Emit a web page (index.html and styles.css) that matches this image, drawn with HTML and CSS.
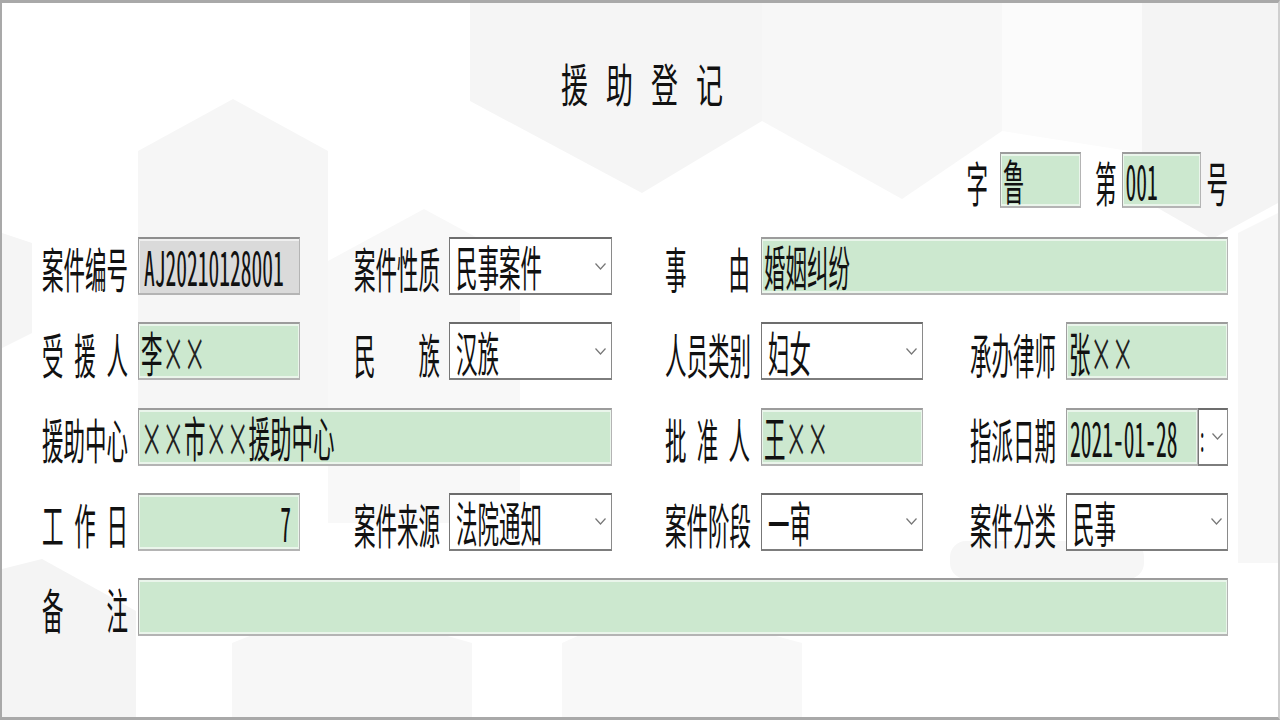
FILE: index.html
```html
<!DOCTYPE html>
<html lang="zh-CN">
<head>
<meta charset="utf-8">
<title>援助登记</title>
<link rel="stylesheet" href="styles.css">
</head>
<body>
<div class="page">
  <svg class="bg" width="1276" height="714" viewBox="0 0 1276 714" aria-hidden="true">
    <polygon points="468,0 760,0 760,118 640,190 468,98" fill="#f5f5f5"/>
    <polygon points="760,0 1000,0 1000,128 900,196 760,118" fill="#f7f7f7"/>
    <polygon points="1000,0 1140,0 1140,150 1000,128" fill="#fbfbfb"/>
    <polygon points="1140,0 1276,0 1276,200 1210,236 1140,196" fill="#f4f4f4"/>
    <polygon points="136,148 231,96 326,148 326,420 136,420" fill="#f6f6f6"/>
    <polygon points="326,258 422,206 518,258 518,520 326,520" fill="#f8f8f8"/>
    <polygon points="0,230 30,240 30,330 0,345" fill="#f5f5f5"/>
    <polygon points="0,566 40,556 134,608 134,714 0,714" fill="#f4f4f4"/>
    <polygon points="230,640 330,600 470,640 470,714 230,714" fill="#f7f7f7"/>
    <polygon points="560,640 650,600 800,640 800,714 560,714" fill="#f8f8f8"/>
    <rect x="948" y="538" width="194" height="38" rx="16" fill="#f6f6f6"/>
    <polygon points="1236,230 1276,210 1276,560 1236,560" fill="#f7f7f7"/>
  </svg>

  <div class="title"><span class="tt">援助登记</span></div>

  <div class="docno">
    <span class="lbl">字</span>
    <div class="fld g w81"><span class="t">鲁</span></div>
    <span class="lbl l2">第</span>
    <div class="fld g w79"><span class="t num">001</span></div>
    <span class="lbl l3">号</span>
  </div>

  <div class="grid">
    <div class="lbl c1">案件编号</div>
    <div class="fld ro c3"><span class="t num">AJ20210128001</span></div>
    <div class="lbl c5">案件性质</div>
    <div class="fld sel c7"><span class="t">民事案件</span><svg class="chev" width="11" height="7" viewBox="0 0 11 7"><polyline points="0.5,0.5 5.5,6 10.5,0.5" fill="none" stroke="#777" stroke-width="1.2"/></svg></div>
    <div class="lbl c9 sp"><span>事</span><span>由</span></div>
    <div class="fld g c11w"><span class="t">婚姻纠纷</span></div>

    <div class="lbl c1 sp"><span>受</span><span>援</span><span>人</span></div>
    <div class="fld g c3"><span class="t">李<span class="x">×</span><span class="x">×</span></span></div>
    <div class="lbl c5 sp"><span>民</span><span>族</span></div>
    <div class="fld sel c7"><span class="t">汉族</span><svg class="chev" width="11" height="7" viewBox="0 0 11 7"><polyline points="0.5,0.5 5.5,6 10.5,0.5" fill="none" stroke="#777" stroke-width="1.2"/></svg></div>
    <div class="lbl c9">人员类别</div>
    <div class="fld sel c11"><span class="t">妇女</span><svg class="chev" width="11" height="7" viewBox="0 0 11 7"><polyline points="0.5,0.5 5.5,6 10.5,0.5" fill="none" stroke="#777" stroke-width="1.2"/></svg></div>
    <div class="lbl c13">承办律师</div>
    <div class="fld g c15"><span class="t">张<span class="x">×</span><span class="x">×</span></span></div>

    <div class="lbl c1">援助中心</div>
    <div class="fld g c3w"><span class="t"><span class="x">×</span><span class="x">×</span>市<span class="x">×</span><span class="x">×</span>援助中心</span></div>
    <div class="lbl c9 sp"><span>批</span><span>准</span><span>人</span></div>
    <div class="fld g c11"><span class="t">王<span class="x">×</span><span class="x">×</span></span></div>
    <div class="lbl c13">指派日期</div>
    <div class="date c15">
      <div class="fld g dpart"><span class="t num">2021-01-28</span></div>
      <div class="fld dbtn"><span class="t colon">:</span><svg class="chev" width="11" height="7" viewBox="0 0 11 7"><polyline points="0.5,0.5 5.5,6 10.5,0.5" fill="none" stroke="#777" stroke-width="1.2"/></svg></div>
    </div>

    <div class="lbl c1 sp"><span>工</span><span>作</span><span>日</span></div>
    <div class="fld g c3 right"><span class="t num">7</span></div>
    <div class="lbl c5">案件来源</div>
    <div class="fld sel c7"><span class="t">法院通知</span><svg class="chev" width="11" height="7" viewBox="0 0 11 7"><polyline points="0.5,0.5 5.5,6 10.5,0.5" fill="none" stroke="#777" stroke-width="1.2"/></svg></div>
    <div class="lbl c9">案件阶段</div>
    <div class="fld sel c11"><span class="t">一审</span><svg class="chev" width="11" height="7" viewBox="0 0 11 7"><polyline points="0.5,0.5 5.5,6 10.5,0.5" fill="none" stroke="#777" stroke-width="1.2"/></svg></div>
    <div class="lbl c13">案件分类</div>
    <div class="fld sel c15"><span class="t">民事</span><svg class="chev" width="11" height="7" viewBox="0 0 11 7"><polyline points="0.5,0.5 5.5,6 10.5,0.5" fill="none" stroke="#777" stroke-width="1.2"/></svg></div>

    <div class="lbl c1 sp"><span>备</span><span>注</span></div>
    <div class="fld g c3all"></div>
  </div>
</div>
</body>
</html>
```

FILE: styles.css
```css
html, body {
  margin: 0;
  padding: 0;
  background: #ffffff;
}

body {
  font-family: "Noto Sans CJK SC", "Noto Sans", sans-serif;
  color: #111;
}

.page {
  position: relative;
  width: 1280px;
  height: 720px;
  box-sizing: border-box;
  border-top: 3px solid #a9a9a9;
  border-bottom: 3px solid #a9a9a9;
  border-left: 2px solid #a9a9a9;
  border-right: 2px solid #cfcfcf;
  padding-top: 49px;
  overflow: hidden;
  background: #fff;
}

.bg {
  position: absolute;
  left: 0;
  top: 0;
  z-index: 0;
}

.title,
.docno,
.grid {
  position: relative;
  z-index: 1;
}

.title {
  height: 60px;
  display: flex;
  align-items: center;
  justify-content: center;
  padding-left: 22px;
}

.tt {
  display: inline-block;
  font-size: 27px;
  letter-spacing: 18px;
  line-height: 1;
  transform: scaleY(1.7);
}

/* 字 ... 号 */
.docno {
  margin-top: 40px;
  height: 56px;
  display: flex;
  align-items: center;
  justify-content: flex-end;
  padding-right: 50px;
}

.docno .fld {
  height: 56px;
}

.docno .lbl {
  margin-right: 12px;
}

.docno .l2 {
  margin-left: 14px;
  margin-right: 6px;
}

.docno .l3 {
  margin-left: 5px;
  margin-right: 0;
}

.w81 { width: 81px; }
.w79 { width: 79px; }

/* Main grid */
.grid {
  margin-top: 29px;
  margin-left: 40px;
  display: grid;
  grid-template-columns: 86px 10px 162px 54px 86px 9px 163px 53px 85px 11px 162px 47px 86px 10px 162px;
  grid-template-rows: repeat(5, 58px);
  row-gap: 27.25px;
}

.c1 { grid-column: 1; }
.c3 { grid-column: 3; }
.c3w { grid-column: 3 / 8; }
.c3all { grid-column: 3 / 16; }
.c5 { grid-column: 5; }
.c7 { grid-column: 7; }
.c9 { grid-column: 9; }
.c11 { grid-column: 11; }
.c11w { grid-column: 11 / 16; }
.c13 { grid-column: 13; }
.c15 { grid-column: 15; }

/* Labels */
.lbl {
  font-size: 21.5px;
  line-height: 1;
  align-self: center;
  display: flex;
  white-space: nowrap;
  transform: translateY(2px) scaleY(2.2);
  color: #111;
}

.lbl.sp {
  justify-content: space-between;
}

/* Fields */
.fld {
  box-sizing: border-box;
  height: 100%;
  display: flex;
  align-items: center;
  font-size: 21.5px;
  border-top: 2px solid #9c9c9c;
  border-bottom: 2px solid #b4b4b4;
  border-left: 1px solid #a0a0a0;
  border-right: 1px solid #b4b4b4;
  padding-left: 2px;
  white-space: nowrap;
}

.fld .t {
  display: inline-block;
  line-height: 1;
  transform: scaleY(2.2);
  color: #111;
}

.num {
  font-feature-settings: "hwid" 1;
}

.x {
  display: inline-block;
  width: 1em;
  text-align: center;
  color: #222;
}

.g {
  background: #cce8cf;
  box-shadow: inset 0 2px 0 #eaf5eb, inset 1px 0 0 #eaf5eb, inset -1px 0 0 #eaf5eb, inset 0 -2px 0 #eaf5eb;
}

.ro {
  background: #dadada;
  border-top: 2px solid #8e8e8e;
  box-shadow: inset 0 2px 0 #efefef, inset 1px 0 0 #efefef;
  padding-left: 5px;
}

.sel {
  background: #ffffff;
  border-top: 2px solid #6d6d6d;
  border-bottom: 2px solid #7d7d7d;
  border-left: 1px solid #777;
  border-right: 1px solid #8a8a8a;
  justify-content: space-between;
  padding-left: 6px;
  padding-right: 5px;
}

.right {
  justify-content: flex-end;
  padding-right: 8px;
}

.date {
  display: flex;
  height: 100%;
}

.dpart {
  flex: 1;
  padding-left: 3px;
}

.dbtn {
  width: 30px;
  flex: none;
  background: #fff;
  border-top: 2px solid #6d6d6d;
  border-bottom: 2px solid #7d7d7d;
  border-left: 1px solid #777;
  border-right: 1px solid #8a8a8a;
  padding-left: 1px;
  padding-right: 4px;
  justify-content: space-between;
}

.colon {
  font-size: 16px;
}

.chev {
  flex: none;
}
```
